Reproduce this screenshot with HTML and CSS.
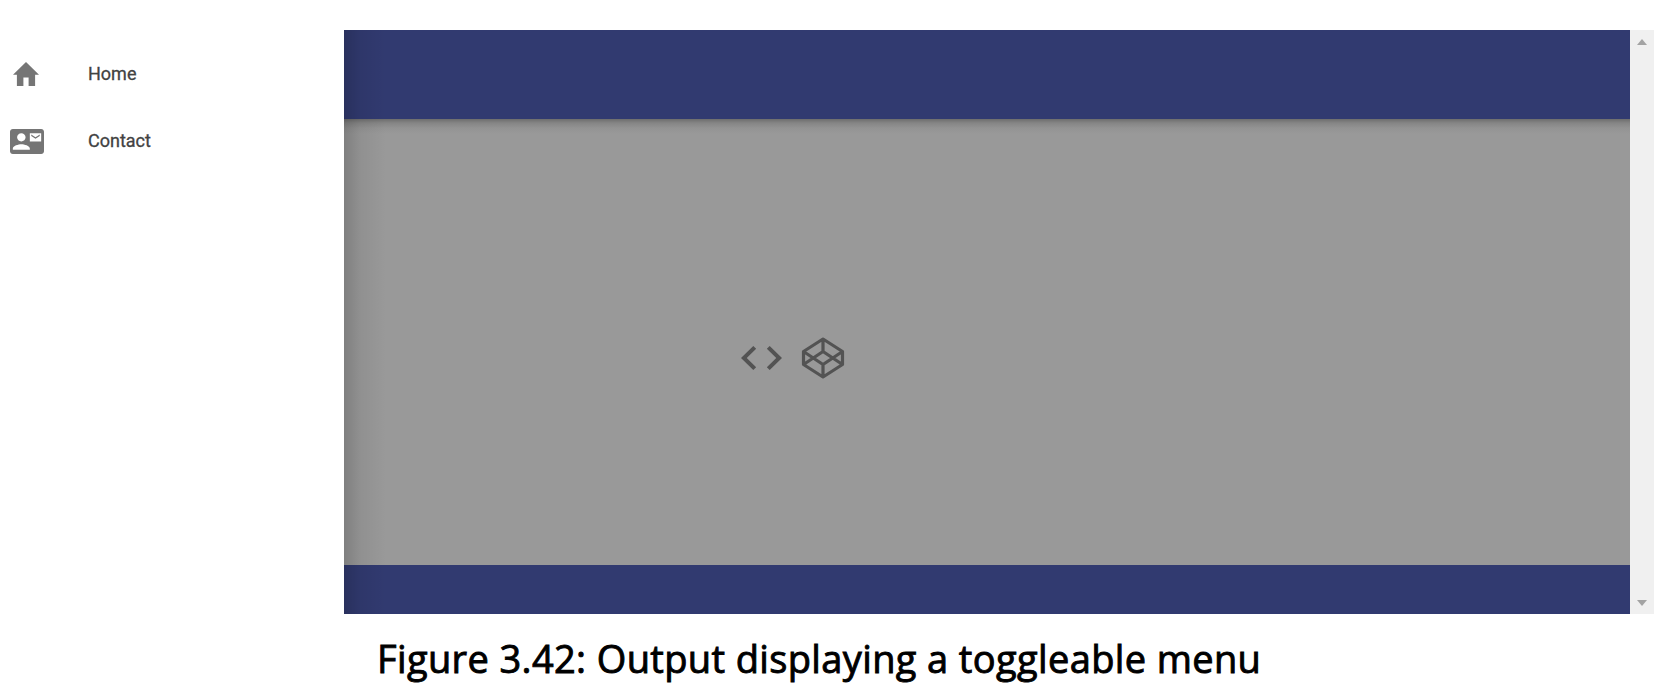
FILE: index.html
```html
<!DOCTYPE html>
<html lang="en">
<head>
<meta charset="utf-8">
<title>Toggleable menu</title>
<link rel="stylesheet" href="styles.css">
</head>
<body>
<figure class="figure">
  <div class="window">
    <nav class="drawer">
      <a class="item">
        <svg class="icon icon-home" viewBox="2 3 20 17" preserveAspectRatio="none"><path d="M10 20v-6h4v6h5v-8h3L12 3 2 12h3v8z"/></svg>
        <span class="label">Home</span>
      </a>
      <a class="item">
        <svg class="icon icon-contact" viewBox="0 3 24 18" preserveAspectRatio="none"><path d="M22 3H2C.9 3 0 3.900 0 5v14c0 1.100.9 2 2 2h20c1.100 0 2-.9 2-2V5c0-1.100-.9-2-2-2zM8 6c1.660 0 3 1.340 3 3s-1.340 3-3 3-3-1.340-3-3 1.340-3 3-3zm6 12H2v-1c0-2 4-3.100 6-3.100s6 1.100 6 3.100v1zm8-6h-8V6h8v6zm-1-5l-3 2-3-2v1l3 2 3-2V7z"/></svg>
        <span class="label">Contact</span>
      </a>
    </nav>
    <div class="page">
      <header class="toolbar"></header>
      <main class="content">
        <svg class="icon-code" viewBox="2 6 20 12" preserveAspectRatio="none"><path d="M9.400 16.600L4.800 12l4.600-4.600L8 6l-6 6 6 6 1.400-1.400zm5.200 0l4.600-4.600-4.600-4.600L16 6l6 6-6 6-1.400-1.400z"/></svg>
        <svg class="icon-pen" viewBox="0 0 44 42"><path d="M22 2 41.500 14.500V27.500L22 40 2.500 27.500V14.500ZM22 2V14.500M22 27.500V40M2.500 14.500 22 27.500 41.500 14.500M2.500 27.500 22 14.500 41.500 27.500"/></svg>
      </main>
      <footer class="bottom"></footer>
    </div>
    <div class="scrollbar">
      <svg class="arrow" viewBox="0 0 10 6"><path d="M5 0 10 6H0z"/></svg>
      <svg class="arrow" viewBox="0 0 10 6"><path d="M0 0H10L5 6z"/></svg>
    </div>
  </div>
  <figcaption class="caption">Figure 3.42: Output displaying a toggleable menu</figcaption>
</figure>
</body>
</html>
```
FILE: styles.css
```css
body {
  margin: 0;
  background: #fff;
}
.figure {
  box-sizing: border-box;
  height: 692px;
  margin: 0;
  padding-top: 30px;
  overflow: hidden;
}
.window {
  display: flex;
  width: 1654px;
  height: 584px;
}
.drawer {
  box-sizing: border-box;
  width: 344px;
  padding-top: 11px;
}
.item {
  display: flex;
  align-items: center;
  height: 67px;
}
.icon {
  fill: #757575;
}
.icon-home {
  width: 26px;
  height: 24px;
  margin: 0 48px 1px 13px;
}
.icon-contact {
  width: 34px;
  height: 25px;
  margin: 0 44px 0 10px;
}
.label {
  padding: 0 0 1px;
  font: 400 18px/24px Roboto, sans-serif;
  letter-spacing: 0;
  color: #424242;
  -webkit-text-stroke: .3px #424242;
}
.icon-home + .label {
  padding-left: 1px;
}
.page {
  display: flex;
  flex-direction: column;
  width: 1286px;
  background:
    linear-gradient(90deg, rgba(0, 0, 0, .17), rgba(0, 0, 0, .06) 16px, rgba(0, 0, 0, 0) 42px),
    linear-gradient(#313a70 89px, #6d6d6d 89px, #858585 93px, #939393 98px, #999 104px, #999 535px, #313a70 535px);
}
.toolbar {
  height: 89px;
}
.content {
  display: flex;
  flex: 1;
  align-items: center;
  gap: 19px;
  padding: 32px 0 0 397px;
}
.icon-code {
  width: 41px;
  height: 24px;
  fill: #535353;
}
.icon-pen {
  width: 44px;
  height: 42px;
  fill: none;
  stroke: #535353;
  stroke-width: 3.2;
  stroke-linejoin: round;
}
.bottom {
  height: 49px;
}
.scrollbar {
  box-sizing: border-box;
  display: flex;
  flex-direction: column;
  align-items: center;
  justify-content: space-between;
  width: 24px;
  padding: 9px 0 8px;
  background: #f0f0f0;
}
.arrow {
  width: 10px;
  height: 6px;
  fill: #a3a3a3;
}
.caption {
  padding: 18px 0 0 377px;
  font: 400 38px/52px "Open Sans", sans-serif;
  letter-spacing: .37px;
  color: #000;
  white-space: nowrap;
  -webkit-text-stroke: .9px #000;
}
```
